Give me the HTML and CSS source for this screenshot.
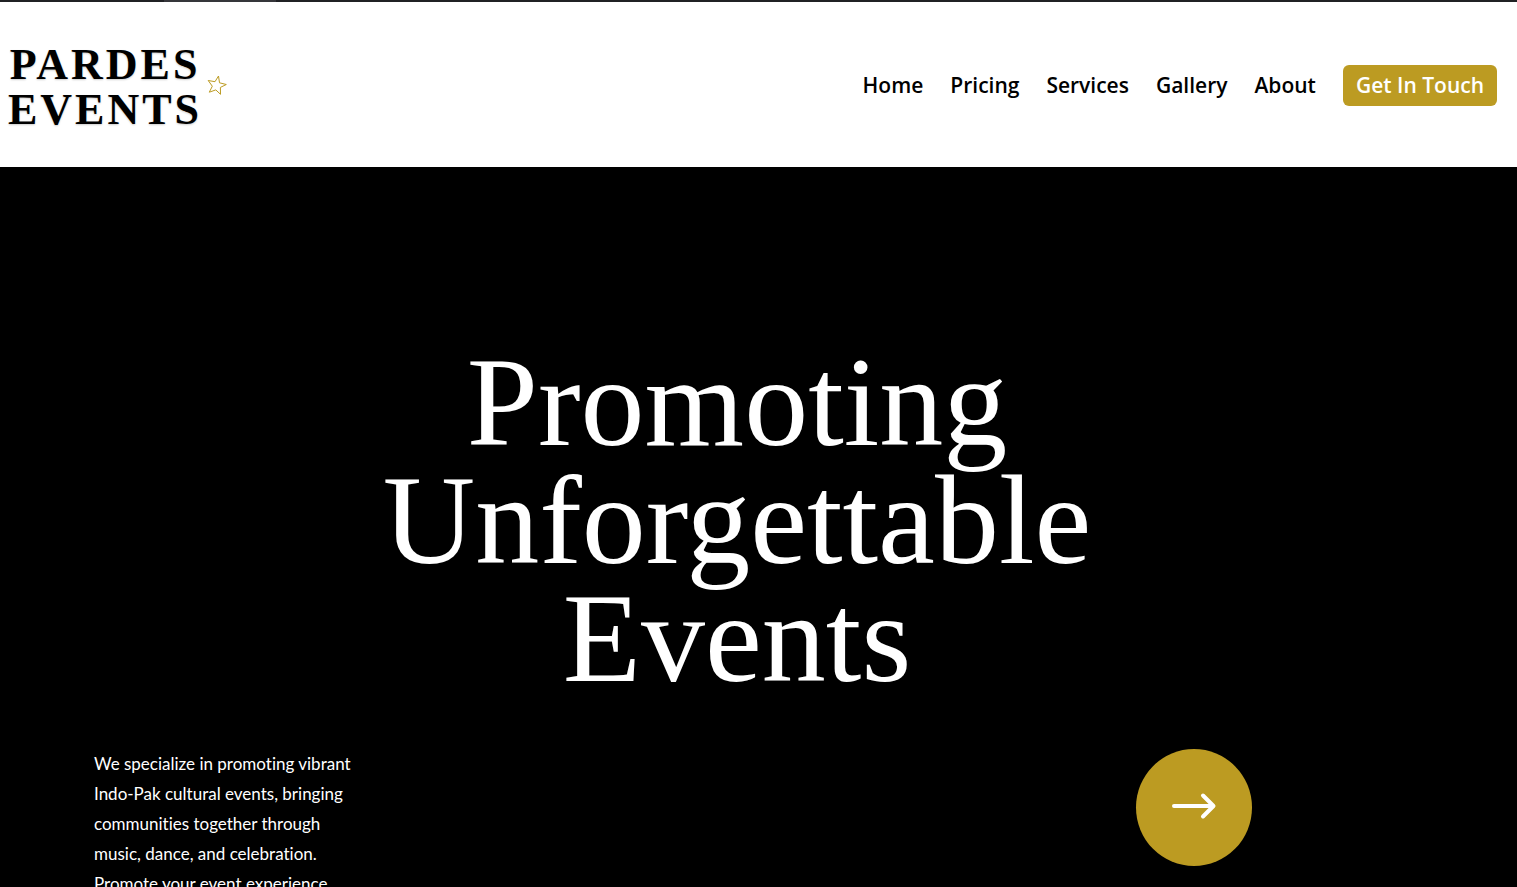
FILE: index.html
```html
<!DOCTYPE html>
<html lang="en">
<head>
<meta charset="utf-8">
<meta name="viewport" content="width=device-width, initial-scale=1">
<title>Pardes Events</title>
<link rel="stylesheet" href="styles.css">
</head>
<body class="page">
<header class="header">
  <a class="logo" href="#">
    <span class="logo-text">PARDES<br>EVENTS</span>
    <svg class="logo-star" viewBox="0 0 20 20" aria-hidden="true"><path d="M11.500 1 12.500 7.800 19.300 9.500 13.400 12.400 13.500 19.300 8.800 14.900 2.300 17.200 5.300 11.200 1.200 5.500 8 6.700Z"/></svg>
  </a>
  <nav class="nav">
    <a class="nav-link" href="#">Home</a>
    <a class="nav-link" href="#">Pricing</a>
    <a class="nav-link" href="#">Services</a>
    <a class="nav-link" href="#">Gallery</a>
    <a class="nav-link" href="#">About</a>
    <a class="nav-button" href="#">Get In Touch</a>
  </nav>
</header>
<main class="hero">
  <h1 class="hero-title">Promoting Unforgettable Events</h1>
  <div class="hero-row">
    <p class="hero-copy">We specialize in promoting vibrant Indo-Pak cultural events, bringing communities together through music, dance, and celebration. Promote your event experience</p>
    <a class="hero-arrow" href="#" aria-label="Continue">
      <svg class="arrow-icon" viewBox="0 0 46 28" aria-hidden="true"><path d="M3 14H42M32 3.500 42.500 14 32 24.500"/></svg>
    </a>
  </div>
</main>
</body>
</html>
```
FILE: styles.css
```css
* { box-sizing: border-box; }
.page {
  margin: 0;
  height: 100vh;
  overflow: hidden;
  background: #000;
  font-family: "Open Sans", sans-serif;
}
.header {
  display: flex;
  align-items: center;
  justify-content: space-between;
  padding: 38px 20px 35px 8px;
  background:
    linear-gradient(90deg, #202124 164px, #35363a 164px, #35363a 276px, #202124 276px) 0 0 / 100% 2px no-repeat,
    #fff;
}
.logo {
  display: flex;
  align-items: center;
  gap: 3px;
  color: #000;
  text-decoration: none;
}
.logo-text {
  padding-top: 4px;
  font: bold 44px/45px "Liberation Serif", serif;
  letter-spacing: 3px;
  text-align: center;
  text-shadow: 0 1px 2px rgba(0, 0, 0, 0.2);
}
.logo-star {
  width: 20px;
  height: 20px;
  margin-left: 2px;
  fill: none;
  stroke: #bc9b22;
  stroke-width: 1;
}
.nav {
  display: flex;
  align-items: center;
  gap: 27px;
}
.nav-link, .nav-button {
  font-size: 21px;
  font-weight: 600;
  line-height: 29px;
  text-decoration: none;
  white-space: nowrap;
}
.nav-link {
  color: #000;
}
.nav-button {
  padding: 6px 13px;
  border-radius: 6px;
  background: #bc9b22;
  color: #fff;
}
.hero {
  padding: 176px 43px 0 0;
}
.hero-title {
  max-width: 760px;
  margin: 0 auto;
  color: #fff;
  font: normal 128px/118px "Liberation Serif", serif;
  text-align: center;
}
.hero-row {
  display: flex;
  align-items: flex-start;
  justify-content: space-between;
  margin-top: 52px;
  padding: 0 222px 0 94px;
}
.hero-copy {
  width: 260px;
  margin: 0;
  color: #fff;
  font: 17px/30px Lato, sans-serif;
  font-variant-ligatures: none;
}
.hero-arrow {
  display: grid;
  place-items: center;
  width: 116px;
  height: 117px;
  padding-bottom: 4px;
  border-radius: 50%;
  background: #bc9b22;
}
.arrow-icon {
  width: 46px;
  height: 28px;
  fill: none;
  stroke: #fff;
  stroke-width: 4;
  stroke-linecap: round;
  stroke-linejoin: round;
}
```
